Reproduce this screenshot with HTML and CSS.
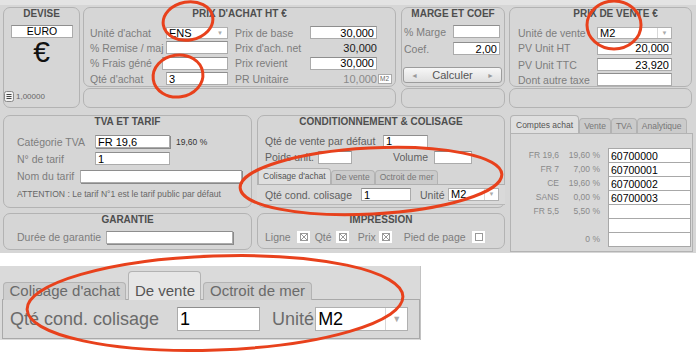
FILE: index.html
```html
<!DOCTYPE html>
<html lang="fr">
<head>
    <meta charset="UTF-8">
    <meta name="viewport" content="width=device-width, initial-scale=1.0">
    <title>Fiche article - Prix</title>
    <link rel="stylesheet" href="styles.css">
</head>
<body>
    <div class="fiche">
        <div class="haut">
            <section class="panel devise">
                <h3>DEVISE</h3>
                <div class="champ euro">EURO</div>
                <div class="symbole">€</div>
                <div class="taux">
                    <svg width="10" height="11" viewBox="0 0 10 11"><rect x=".5" y=".5" width="9" height="10" rx="2" fill="#f2f2f2" stroke="#888"/><path d="M2.5 3.5h5M2.5 5.5h5M2.5 7.5h5" stroke="#444"/></svg>
                    <span>1,00000</span>
                </div>
            </section>

            <div class="bloc achat">
                <section class="panel haut-bloc">
                    <h3>PRIX D'ACHAT HT €</h3>
                    <div class="grille g-achat">
                        <label>Unité d'achat</label>
                        <div class="combo"><span>ENS</span><b>▼</b></div>
                        <span></span>
                        <label>Prix de base</label>
                        <input class="champ num" value="30,000" readonly>
                        <span></span>

                        <label>% Remise / maj</label>
                        <input class="champ" readonly>
                        <span></span>
                        <label>Prix d'ach. net</label>
                        <span class="valeur">30,000</span>
                        <span></span>

                        <label>% Frais géné</label>
                        <input class="champ large" readonly>
                        <span></span>
                        <label>Prix revient</label>
                        <input class="champ num" value="30,000" readonly>
                        <span></span>

                        <label>Qté d'achat</label>
                        <input class="champ" value="3" readonly>
                        <span></span>
                        <label>PR Unitaire</label>
                        <span class="valeur gris">10,000</span>
                        <span class="mini">M2</span>
                    </div>
                </section>
                <section class="panel bas-bloc"></section>
            </div>

            <div class="bloc marge">
                <section class="panel haut-bloc">
                    <h3>MARGE ET COEF</h3>
                    <div class="grille g-marge">
                        <label>% Marge</label>
                        <input class="champ" readonly>
                        <label>Coef.</label>
                        <input class="champ num" value="2,00" readonly>
                    </div>
                    <div class="calculer"><span>◄</span>Calculer<span>►</span></div>
                </section>
                <section class="panel bas-bloc"></section>
            </div>

            <div class="bloc vente">
                <section class="panel haut-bloc">
                    <h3 class="titre-vente">PRIX DE VENTE €</h3>
                    <div class="grille g-vente">
                        <label>Unité de vente</label>
                        <div class="combo separe"><span>M2</span><b>▼</b></div>
                        <label>PV Unit HT</label>
                        <input class="champ num" value="20,000" readonly>
                        <label>PV Unit TTC</label>
                        <input class="champ num" value="23,920" readonly>
                        <label>Dont autre taxe</label>
                        <input class="champ" readonly>
                    </div>
                </section>
                <section class="panel bas-bloc"></section>
            </div>
        </div>

        <div class="bas">
            <section class="panel tva">
                <h3>TVA ET TARIF</h3>
                <div class="ligne l1">
                    <label class="l-tva">Catégorie TVA</label>
                    <input class="champ relief c-tva" value="FR 19,6" readonly>
                    <span class="petit">19,60 %</span>
                </div>
                <div class="ligne">
                    <label class="l-tva">N° de tarif</label>
                    <input class="champ c-tva" value="1" readonly>
                </div>
                <div class="ligne l3">
                    <label>Nom du tarif</label>
                    <input class="champ relief nom" readonly>
                </div>
                <div class="ligne note">ATTENTION : Le tarif N°1 est le tarif public par défaut</div>
            </section>

            <section class="panel cond">
                <h3>CONDITIONNEMENT &amp; COLISAGE</h3>
                <div class="ligne l1">
                    <label class="l-qv">Qté de vente par défaut</label>
                    <input class="champ qv" value="1" readonly>
                </div>
                <div class="ligne">
                    <label class="l-poids">Poids unit.</label>
                    <input class="champ poids" readonly>
                    <label class="l-vol">Volume</label>
                    <input class="champ volume" readonly>
                </div>
                <div class="onglets petits">
                    <span class="onglet actif">Colisage d'achat</span>
                    <span class="onglet">De vente</span>
                    <span class="onglet">Octroit de mer</span>
                </div>
                <div class="contenu-onglet">
                    <label class="l-colis">Qté cond. colisage</label>
                    <input class="champ colis" value="1" readonly>
                    <label class="l-unite">Unité</label>
                    <div class="combo separe unite"><span>M2</span><b>▼</b></div>
                </div>
            </section>

            <div class="comptes">
                <div class="onglets moyens">
                    <span class="onglet actif">Comptes achat</span>
                    <span class="onglet">Vente</span>
                    <span class="onglet">TVA</span>
                    <span class="onglet">Analytique</span>
                </div>
                <div class="contenu-comptes">
                    <span class="cat">FR 19,6</span><span class="pct">19,60 %</span><input class="compte" value="60700000" readonly>
                    <span class="cat">FR 7</span><span class="pct">7,00 %</span><input class="compte" value="60700001" readonly>
                    <span class="cat">CE</span><span class="pct">19,60 %</span><input class="compte" value="60700002" readonly>
                    <span class="cat">SANS</span><span class="pct">0,00 %</span><input class="compte" value="60700003" readonly>
                    <span class="cat">FR 5,5</span><span class="pct">5,50 %</span><input class="compte" readonly>
                    <span class="cat"></span><span class="pct"></span><input class="compte" readonly>
                    <span class="cat"></span><span class="pct">0 %</span><input class="compte" readonly>
                </div>
            </div>

            <section class="panel garantie">
                <h3>GARANTIE</h3>
                <div class="ligne l1">
                    <label>Durée de garantie</label>
                    <input class="champ relief duree" readonly>
                </div>
            </section>

            <section class="panel impression">
                <h3>IMPRESSION</h3>
                <div class="ligne l1 cases">
                    <label>Ligne</label>
                    <svg class="case c1" width="13" height="12" viewBox="0 0 13 12"><rect width="13" height="12" fill="#fff"/><rect x="3.5" y="2.5" width="7" height="7" fill="none" stroke="#999"/><path d="M3.5 2.5l7 7M10.5 2.5l-7 7" stroke="#999"/></svg>
                    <label class="m-qte">Qté</label>
                    <svg class="case c2" width="13" height="12" viewBox="0 0 13 12"><rect width="13" height="12" fill="#fff"/><rect x="3.5" y="2.5" width="7" height="7" fill="none" stroke="#999"/><path d="M3.5 2.5l7 7M10.5 2.5l-7 7" stroke="#999"/></svg>
                    <label class="m-prix">Prix</label>
                    <svg class="case c3" width="13" height="12" viewBox="0 0 13 12"><rect width="13" height="12" fill="#fff"/><rect x="3.5" y="2.5" width="7" height="7" fill="none" stroke="#999"/><path d="M3.5 2.5l7 7M10.5 2.5l-7 7" stroke="#999"/></svg>
                    <label class="m-pied">Pied de page</label>
                    <svg class="case c4" width="13" height="12" viewBox="0 0 13 12"><rect width="13" height="12" fill="#fff"/><rect x="3.5" y="2.5" width="7" height="7" fill="none" stroke="#999"/></svg>
                </div>
            </section>
        </div>
    </div>

    <div class="agrandi">
        <div class="onglets grands">
            <span class="onglet">Colisage d'achat</span>
            <span class="onglet actif">De vente</span>
            <span class="onglet">Octroit de mer</span>
        </div>
        <div class="contenu-agrandi">
            <label class="g-colis">Qté cond. colisage</label>
            <input class="champ g-champ" value="1" readonly>
            <label class="g-unite">Unité</label>
            <div class="combo separe g-combo"><span>M2</span><b>▼</b></div>
        </div>
    </div>

    <!-- annotations rouges par-dessus la capture -->
    <svg class="annotations" width="699" height="355" viewBox="0 0 699 355">
        <g fill="none" stroke="#e8411c" stroke-width="3">
            <ellipse cx="188" cy="21" rx="25" ry="19" transform="rotate(-10 188 21)"/>
            <ellipse cx="178" cy="76" rx="25" ry="21" transform="rotate(-8 178 76)"/>
            <ellipse cx="614" cy="25" rx="27" ry="24"/>
            <ellipse cx="371" cy="181" rx="131" ry="33" transform="rotate(-3 371 181)"/>
            <ellipse cx="215" cy="303" rx="188" ry="47" transform="rotate(-2 215 303)"/>
        </g>
    </svg>
</body>
</html>
```

FILE: styles.css
```css
* {
    box-sizing: border-box;
}
body {
    margin: 0;
    width: 699px;
    height: 355px;
    overflow: hidden;
    position: relative;
    background: #fff;
    font-family: "Liberation Sans", Arial, sans-serif;
    font-size: 10.5px;
    color: #7d7d7d;
}
label {
    white-space: nowrap;
}
h3 {
    margin: 0;
    font-size: 10px;
    line-height: 12px;
    color: #4e4e4e;
    text-align: center;
}
.fiche {
    width: 696px;
    height: 253px;
    padding: 7px 0 0 3px;
    background: linear-gradient(#e3e3e3 0, #e3e3e3 5px, #d6d6d6 5px);
}
.panel {
    background: #d6d6d6;
    border: 1px solid #b3b3b3;
    border-radius: 7px;
}
.champ {
    display: block;
    width: 100%;
    height: 13px;
    margin: 0;
    padding: 0 2px;
    border: 1px solid #ababab;
    border-top-color: #8e8e8e;
    background: #fff;
    font: 11px "Liberation Sans", Arial, sans-serif;
    line-height: 11px;
    color: #000;
    outline: none;
}
.num {
    text-align: right;
}
.relief {
    box-shadow: 1px 1px 0 #8a8a8a;
}
.combo {
    display: flex;
    height: 12px;
    background: #fff;
    border: 1px solid #b0b0b0;
    font-size: 11px;
    line-height: 10px;
    color: #000;
}
.combo span {
    flex: 1;
    padding-left: 2px;
}
.combo b {
    width: 14px;
    font-size: 6px;
    font-weight: normal;
    color: #aaa;
    text-align: center;
}
.separe b {
    border-left: 1px solid #d8d8d8;
}

/* ligne du haut */
.haut {
    display: flex;
    height: 101px;
}
.devise {
    width: 77px;
    margin-right: 3px;
    display: flex;
    flex-direction: column;
    padding-bottom: 5px;
}
.euro {
    width: auto;
    margin: 5px 6px 0 7px;
    text-align: center;
    font-size: 10.5px;
}
.symbole {
    margin-top: 0;
    font-size: 30px;
    line-height: 27px;
    text-align: center;
    color: #111;
}
.taux {
    margin-top: auto;
    display: flex;
    align-items: center;
    gap: 2px;
    font-size: 8px;
    color: #666;
}
.bloc {
    display: flex;
    flex-direction: column;
    gap: 1px;
}
.haut-bloc {
    height: 80px;
}
.bas-bloc {
    height: 20px;
}
.achat {
    width: 313px;
    margin-right: 5px;
}
.marge {
    width: 104px;
    margin-right: 4px;
}
.vente {
    width: 183px;
}
.grille {
    display: grid;
    align-items: center;
    margin-top: 5px;
}
.g-achat {
    grid-template-columns: 76px 62px 7px 75px 67px 16px;
    grid-template-rows: 15px 15px 16px 15px;
    padding-left: 6px;
}
.g-achat .combo {
    height: 12px;
}
.large {
    margin-left: -4px;
    width: calc(100% + 4px);
}
.valeur {
    text-align: right;
    font-size: 11px;
    color: #1a1a1a;
}
.gris {
    color: #8a8a8a;
}
.mini {
    height: 10px;
    margin-left: 1px;
    width: 14px;
    border: 1px solid #aaa;
    background: #fff;
    font-size: 6.5px;
    line-height: 8px;
    color: #666;
    padding-left: 1px;
}
.g-marge {
    grid-template-columns: 49px 47px;
    grid-template-rows: 17px 17px;
    margin-top: 3px;
    padding-left: 2px;
}
.calculer {
    display: flex;
    justify-content: space-between;
    align-items: center;
    height: 16px;
    margin: 10px 2px 0 1px;
    padding: 0 7px;
    border: 1px solid #9c9c9c;
    border-radius: 3px;
    background: linear-gradient(#f7f7f7, #dedede);
    font-size: 11px;
    color: #555;
}
.calculer span {
    font-size: 7px;
    color: #9a9a9a;
}
.titre-vente {
    padding-left: 30px;
}
.g-vente {
    grid-template-columns: 79px 75px;
    grid-template-rows: 15px 16px 17px 13px;
    padding-left: 8px;
}

/* partie basse */
.bas {
    display: grid;
    grid-template-columns: 249px 248px 183px;
    grid-template-rows: 93px 37px;
    gap: 5px;
    margin-top: 7px;
}
.tva {
    grid-column: 1;
    grid-row: 1;
}
.cond {
    grid-column: 2;
    grid-row: 1;
}
.comptes {
    grid-column: 3;
    grid-row: 1 / 3;
    height: 137px;
}
.garantie {
    grid-column: 1;
    grid-row: 2;
}
.impression {
    grid-column: 2;
    grid-row: 2;
    height: 36px;
}
.ligne {
    display: flex;
    align-items: center;
    height: 17px;
}
.tva .ligne {
    padding-left: 13px;
}
.tva .l1 {
    margin-top: 5px;
}
.tva .l3,
.tva .note {
    height: 18px;
}
.l-tva {
    width: 78px;
}
.c-tva {
    width: 75px;
}
.petit {
    margin-left: 6px;
    font-size: 8.5px;
    color: #333;
}
.nom {
    width: 162px;
    margin-left: 6px;
}
.note {
    font-size: 8.6px;
    color: #666;
}
.garantie .ligne {
    padding-left: 13px;
    height: 16px;
}
.garantie .l1,
.impression .l1 {
    margin-top: 3px;
}
.duree {
    width: 127px;
    margin-left: 5px;
}
.cond .ligne {
    height: 16px;
    padding-left: 7px;
    color: #606060;
}
.cond .l1 {
    margin-top: 5px;
}
.l-qv {
    width: 118px;
}
.qv {
    width: 45px;
}
.l-poids {
    width: 53px;
}
.poids {
    width: 34px;
}
.l-vol {
    margin-left: 41px;
    width: 41px;
}
.volume {
    width: 38px;
}
.onglets {
    display: flex;
    align-items: flex-end;
}
.onglet {
    border: 1px solid #b3b3b3;
    border-bottom: none;
    border-radius: 4px 4px 0 0;
    background: #cbcbcb;
    color: #777;
    white-space: nowrap;
}
.onglet.actif {
    background: #dfdfdf;
    color: #555;
}
.petits {
    margin-top: 3px;
    height: 16px;
}
.petits .onglet {
    height: 14px;
    padding: 0 4px;
    font-size: 8.5px;
    line-height: 13px;
}
.petits .onglet.actif {
    height: 16px;
    line-height: 15px;
}
.contenu-onglet {
    display: flex;
    align-items: center;
    height: 21px;
    margin: 0 -1px;
    padding-left: 8px;
    border-top: 1px solid #b0b0b0;
    border-bottom: 1px solid #b8b8b8;
    background: #d9d9d9;
    color: #606060;
}
.l-colis {
    width: 96px;
}
.colis {
    width: 50px;
}
.l-unite {
    margin-left: 9px;
    width: 28px;
}
.unite {
    width: 51px;
    height: 13px;
}
.impression .ligne {
    padding-left: 7px;
    height: 16px;
}
.case {
    flex: none;
}
.c1 {
    margin-left: 6px;
}
.m-qte {
    margin-left: 5px;
}
.c2 {
    margin-left: 4px;
}
.m-prix {
    margin-left: 9px;
}
.c3 {
    margin-left: 3px;
}
.m-pied {
    margin-left: 12px;
}
.c4 {
    margin-left: 6px;
}
.moyens {
    height: 18px;
}
.moyens .onglet {
    height: 15px;
    padding: 0 4px;
    font-size: 8.5px;
    line-height: 14px;
}
.moyens .onglet.actif {
    height: 18px;
    line-height: 19px;
    padding: 0 5px;
}
.contenu-comptes {
    display: grid;
    grid-template-columns: 47px 41px 91px;
    grid-auto-rows: 14px;
    align-content: start;
    height: 119px;
    padding: 14px 0 0 1px;
    border: 1px solid #b3b3b3;
    background: #d8d8d8;
}
.cat,
.pct {
    text-align: right;
    font-size: 8.5px;
    line-height: 14px;
    color: #8a8a8a;
}
.compte {
    display: block;
    width: 83px;
    height: 15px;
    margin: 0 0 0 8px;
    padding: 0 2px;
    border: 1px solid #a8a8a8;
    background: #fff;
    font: 10.5px "Liberation Sans", Arial, sans-serif;
    color: #000;
    outline: none;
}

/* agrandissement */
.agrandi {
    width: 421px;
    height: 74px;
    margin-top: 13px;
    padding-top: 5px;
    background: #dadada;
    border-right: 1px solid #c2c2c2;
}
.grands {
    height: 29px;
    padding-left: 3px;
    gap: 2px;
}
.grands .onglet {
    height: 18px;
    padding: 0 5.5px;
    font-size: 15px;
    line-height: 16px;
    color: #6a6a6a;
    background: #cecece;
}
.grands .onglet.actif {
    height: 29px;
    padding-top: 11px;
    background: #e6e6e6;
    color: #555;
}
.contenu-agrandi {
    display: flex;
    align-items: center;
    width: 418px;
    height: 40px;
    margin: -1px 0 0 2px;
    padding-left: 7px;
    border: 1px solid #a9a9a9;
    background: #d8d8d8;
    font-size: 18px;
    color: #6b6b6b;
}
.g-champ {
    width: 83px;
    height: 24px;
    margin-left: 18px;
    font-size: 18px;
    line-height: 20px;
}
.g-unite {
    margin-left: 12px;
}
.g-combo {
    width: 93px;
    height: 24px;
    margin-left: 1px;
    font-size: 18px;
    line-height: 22px;
}
.g-combo b {
    width: 22px;
    font-size: 9px;
}
.annotations {
    position: absolute;
    top: 0;
    left: 0;
    pointer-events: none;
}
```
